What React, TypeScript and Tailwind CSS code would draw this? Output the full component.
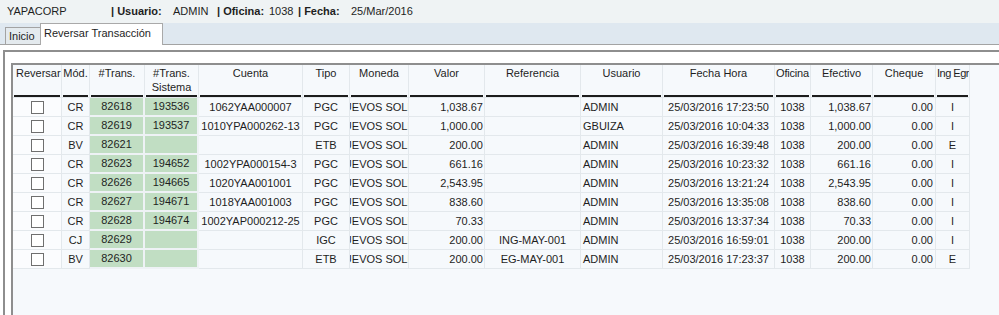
import React from 'react';

type Row = {
  mod: string;
  trans: string;
  sistema: string;
  cuenta: string;
  tipo: string;
  valor: string;
  referencia: string;
  usuario: string;
  fecha: string;
  efectivo: string;
  ie: string;
};

const rows: Row[] = [
  { mod: 'CR', trans: '82618', sistema: '193536', cuenta: '1062YAA000007', tipo: 'PGC', valor: '1,038.67', referencia: '', usuario: 'ADMIN', fecha: '25/03/2016 17:23:50', efectivo: '1,038.67', ie: 'I' },
  { mod: 'CR', trans: '82619', sistema: '193537', cuenta: '1010YPA000262-13', tipo: 'PGC', valor: '1,000.00', referencia: '', usuario: 'GBUIZA', fecha: '25/03/2016 10:04:33', efectivo: '1,000.00', ie: 'I' },
  { mod: 'BV', trans: '82621', sistema: '', cuenta: '', tipo: 'ETB', valor: '200.00', referencia: '', usuario: 'ADMIN', fecha: '25/03/2016 16:39:48', efectivo: '200.00', ie: 'E' },
  { mod: 'CR', trans: '82623', sistema: '194652', cuenta: '1002YPA000154-3', tipo: 'PGC', valor: '661.16', referencia: '', usuario: 'ADMIN', fecha: '25/03/2016 10:23:32', efectivo: '661.16', ie: 'I' },
  { mod: 'CR', trans: '82626', sistema: '194665', cuenta: '1020YAA001001', tipo: 'PGC', valor: '2,543.95', referencia: '', usuario: 'ADMIN', fecha: '25/03/2016 13:21:24', efectivo: '2,543.95', ie: 'I' },
  { mod: 'CR', trans: '82627', sistema: '194671', cuenta: '1018YAA001003', tipo: 'PGC', valor: '838.60', referencia: '', usuario: 'ADMIN', fecha: '25/03/2016 13:35:08', efectivo: '838.60', ie: 'I' },
  { mod: 'CR', trans: '82628', sistema: '194674', cuenta: '1002YAP000212-25', tipo: 'PGC', valor: '70.33', referencia: '', usuario: 'ADMIN', fecha: '25/03/2016 13:37:34', efectivo: '70.33', ie: 'I' },
  { mod: 'CJ', trans: '82629', sistema: '', cuenta: '', tipo: 'IGC', valor: '200.00', referencia: 'ING-MAY-001', usuario: 'ADMIN', fecha: '25/03/2016 16:59:01', efectivo: '200.00', ie: 'I' },
  { mod: 'BV', trans: '82630', sistema: '', cuenta: '', tipo: 'ETB', valor: '200.00', referencia: 'EG-MAY-001', usuario: 'ADMIN', fecha: '25/03/2016 17:23:37', efectivo: '200.00', ie: 'E' },
];

const gridCols =
  'grid grid-cols-[49px_28px_55px_54px_104px_47px_59px_76px_96px_82px_112px_36px_62px_63px_34px] w-[957px]';

const headers: { label: React.ReactNode; cls: string }[] = [
  { label: 'Reversar', cls: 'pl-[2px] text-left' },
  { label: 'Mód.', cls: 'text-center' },
  { label: '#Trans.', cls: 'text-center' },
  { label: <>#Trans.<br />Sistema</>, cls: 'text-center' },
  { label: 'Cuenta', cls: 'text-center' },
  { label: 'Tipo', cls: 'text-center' },
  { label: 'Moneda', cls: 'text-center' },
  { label: 'Valor', cls: 'text-center' },
  { label: 'Referencia', cls: 'text-center' },
  { label: 'Usuario', cls: 'text-center' },
  { label: 'Fecha Hora', cls: 'text-center' },
  { label: 'Oficina', cls: 'text-center tracking-[-0.2px]' },
  { label: 'Efectivo', cls: 'text-center' },
  { label: 'Cheque', cls: 'text-center' },
  { label: 'Ing Egr', cls: 'text-left tracking-[-0.5px]' },
];

const cell = 'h-[19px] border-r border-b border-[#e3e8ec] flex items-center whitespace-nowrap overflow-hidden';
const green = 'h-[19px] border-r-2 border-b-2 border-[#eef2f5] bg-[#c1dec3] flex items-center justify-center whitespace-nowrap overflow-hidden';

const App: React.FC = () => {
  return (
    <div className="w-[999px] h-[315px] overflow-hidden flex flex-col bg-white text-[11px] text-[#1e1e1e] font-['Liberation_Sans',Arial,sans-serif]">
      {/* Top bar */}
      <div className="h-[23px] bg-[#eff3f4] flex items-center pl-[7px] shrink-0">
        <span className="w-[104px]">YAPACORP</span>
        <span className="w-[62px] font-bold">| Usuario:</span>
        <span className="w-[44px]">ADMIN</span>
        <span className="w-[52px] font-bold">| Oficina:</span>
        <span className="w-[29px]">1038</span>
        <span className="w-[53px] font-bold">| Fecha:</span>
        <span>25/Mar/2016</span>
      </div>

      {/* Tabs */}
      <div className="h-[22px] bg-[#dfe8f0] flex items-end pl-[5px] border-b border-[#a3a3a3] shrink-0">
        <div className="h-[17px] w-[35px] border border-r-0 border-b-0 border-[#a3a3a3] bg-[#e4eaee] pl-[3px] pt-px leading-[14px]">
          Inicio
        </div>
        <div className="h-[22px] -mb-px w-[123px] border border-b-0 border-[#a9a9a9] bg-white pl-[3px] pt-[2px] leading-[14px] relative">
          Reversar Transacción
        </div>
      </div>

      <div className="h-[5px] bg-white shrink-0" />

      {/* Panel */}
      <div className="flex-1 ml-[3px] border-l-2 border-t-2 border-[#8e8e8e] bg-white flex flex-col">
        <div className="h-[11px] shrink-0" />
        <div className="flex-1 ml-[6px] border-l-2 border-t-2 border-[#8e8e8e] bg-[#f6f9fc]">
          {/* Header */}
          <div className={gridCols}>
            {headers.map((h, i) => (
              <div key={i} className="h-[33px] border-r border-b border-[#e3e8ec] overflow-hidden">
                <div className={`mx-px h-[32px] border-b-2 border-[#1c1c1c] pt-px leading-[14px] whitespace-nowrap ${h.cls}`}>
                  {h.label}
                </div>
              </div>
            ))}
          </div>

          {/* Rows */}
          {rows.map((r) => (
            <div key={r.trans} className={gridCols}>
              <div className={`${cell} justify-center bg-[#fbfcfe]`}>
                <span className="w-[13px] h-[13px] border border-[#6f6f6f] bg-white" />
              </div>
              <div className={`${cell} justify-center`}>{r.mod}</div>
              <div className={green}>{r.trans}</div>
              <div className={green}>{r.sistema}</div>
              <div className={`${cell} justify-center`}>{r.cuenta}</div>
              <div className={`${cell} justify-center`}>{r.tipo}</div>
              <div className={`${cell} justify-center`}>
                <span className="shrink-0">NUEVOS SOLES</span>
              </div>
              <div className={`${cell} justify-end pr-px`}>{r.valor}</div>
              <div className={`${cell} justify-center`}>{r.referencia}</div>
              <div className={`${cell} justify-start pl-[2px]`}>{r.usuario}</div>
              <div className={`${cell} justify-center`}>{r.fecha}</div>
              <div className={`${cell} justify-center`}>1038</div>
              <div className={`${cell} justify-end pr-px`}>{r.efectivo}</div>
              <div className={`${cell} justify-end pr-[2px]`}>0.00</div>
              <div className={`${cell} justify-center`}>{r.ie}</div>
            </div>
          ))}
        </div>
      </div>
    </div>
  );
};

export default App;
